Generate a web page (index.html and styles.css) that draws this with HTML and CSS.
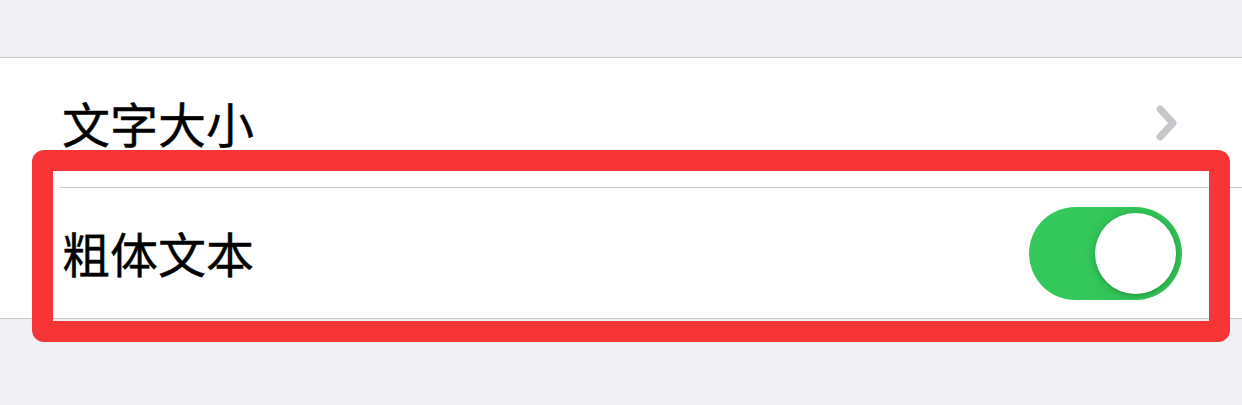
FILE: index.html
```html
<!DOCTYPE html>
<html lang="zh-CN">
<head>
    <meta charset="UTF-8">
    <meta name="viewport" content="width=device-width, initial-scale=1.0">
    <title>显示与文字大小</title>
    <link rel="stylesheet" href="styles.css">
</head>
<body>
    <div class="page">
        <div class="top-space"></div>

        <div class="group">
            <div class="cell">
                <span class="cell-title">文字大小</span>
                <svg class="chevron" width="22" height="36" viewBox="0 0 22 36">
                    <path d="M4 4 L17 18 L4 32" fill="none" stroke="#c7c7cc" stroke-width="7" stroke-linecap="round" stroke-linejoin="round"/>
                </svg>
            </div>
            <div class="separator"></div>
            <div class="cell cell-tall">
                <span class="cell-title">粗体文本</span>
                <div class="switch on">
                    <div class="knob"></div>
                </div>
            </div>
        </div>

        <div class="highlight"></div>
    </div>
</body>
</html>
```

FILE: styles.css
```css
body {
    margin: 0;
    background-color: #f0f0f5;
    font-family: "Noto Sans CJK SC", "Noto Sans", sans-serif;
}

.page {
    position: relative;
    height: 405px;
    overflow: hidden;
}

.top-space {
    height: 57px;
}

.group {
    background-color: #fff;
    border-top: 1px solid #c8c7cc;
    border-bottom: 1px solid #c8c7cc;
}

.cell {
    display: flex;
    align-items: center;
    justify-content: space-between;
    height: 129px;
    padding-left: 62px;
    padding-right: 64px;
}

.cell-tall {
    height: 130px;
    padding-right: 60px;
}

.cell-title {
    font-size: 48px;
    color: #000;
    line-height: 1;
    padding-bottom: 2px;
    -webkit-text-stroke: 0.4px #000;
}

.chevron {
    display: block;
}

.separator {
    height: 1px;
    margin-left: 60px;
    background-color: #c8c7cc;
}

.switch {
    width: 153px;
    height: 93px;
    border-radius: 47px;
    background-color: #e5e5ea;
    display: flex;
    align-items: center;
    box-sizing: border-box;
    padding: 0 6px;
}

.switch.on {
    background: linear-gradient(90deg, #34c759 40%, #31c255 75%, #30bd53 100%);
    justify-content: flex-end;
}

.knob {
    width: 81px;
    height: 81px;
    border-radius: 50%;
    background-color: #fff;
    box-shadow: 0 2px 5px rgba(0, 0, 0, 0.18), -4px 0 10px rgba(0, 0, 0, 0.06);
}

.highlight {
    position: absolute;
    left: 32px;
    top: 150px;
    width: 1198px;
    height: 192px;
    box-sizing: border-box;
    border: 21px solid #f73536;
    border-radius: 12px;
}
```
